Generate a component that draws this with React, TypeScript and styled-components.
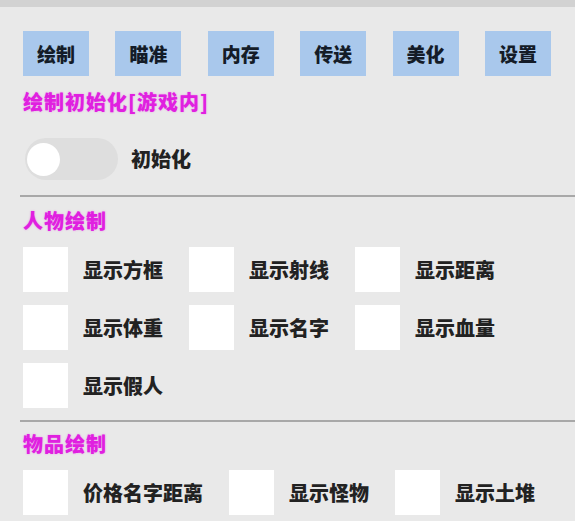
import React from "react";
import styled, { createGlobalStyle } from "styled-components";

const Global = createGlobalStyle`
  html, body {
    margin: 0;
    padding: 0;
    background: #e9e9e9;
    font-family: "Noto Sans CJK SC", "Noto Sans", sans-serif;
  }
`;

const TopBar = styled.div`
  height: 7px;
  background: #d2d2d2;
`;

const Panel = styled.div`
  padding: 24px 0 0 23px;
  display: flex;
  flex-direction: column;
`;

const Tabs = styled.div`
  display: flex;
  gap: 26.4px;
`;

const Tab = styled.button`
  width: 66px;
  height: 45px;
  border: none;
  padding: 0;
  background: #a9c8ec;
  color: #141c28;
  font-family: inherit;
  font-size: 19px;
  font-weight: 900;
  display: flex;
  align-items: center;
  justify-content: center;
`;

const SectionTitle = styled.div<{ $mt: number }>`
  margin-top: ${(p) => p.$mt}px;
  color: #e020e0;
  font-size: 20px;
  font-weight: 900;
  line-height: 24px;
  letter-spacing: 1px;
  text-shadow: 0 0 2px rgba(230, 60, 230, 0.45);
`;

const ToggleRow = styled.div`
  margin-top: 24px;
  display: flex;
  align-items: center;
  gap: 13px;
  margin-left: 2px;
`;

const Track = styled.div`
  width: 93px;
  height: 42px;
  border-radius: 21px;
  background: #dedede;
  display: flex;
  align-items: center;
  padding-left: 2px;
  box-sizing: border-box;
`;

const Knob = styled.div`
  width: 33px;
  height: 33px;
  border-radius: 50%;
  background: #ffffff;
`;

const Label = styled.span`
  color: #222222;
  font-size: 20px;
  font-weight: 900;
  line-height: 24px;
  white-space: nowrap;
`;

const Divider = styled.div<{ $mt: number }>`
  margin-top: ${(p) => p.$mt}px;
  margin-left: -3px;
  height: 2px;
  background: #a8a8a8;
`;

const Options = styled.div<{ $mt: number }>`
  margin-top: ${(p) => p.$mt}px;
  display: flex;
  flex-wrap: wrap;
  row-gap: 13px;
  column-gap: 26px;
  padding-right: 10px;
`;

const Option = styled.label`
  display: flex;
  align-items: center;
  gap: 15px;
`;

const Box = styled.div`
  width: 45px;
  height: 45px;
  background: #ffffff;
`;

const tabs = ["绘制", "瞄准", "内存", "传送", "美化", "设置"];
const people = ["显示方框", "显示射线", "显示距离", "显示体重", "显示名字", "显示血量", "显示假人"];
const items = ["价格名字距离", "显示怪物", "显示土堆"];

export default function App() {
  return (
    <>
      <Global />
      <TopBar />
      <Panel>
        <Tabs>
          {tabs.map((t) => (
            <Tab key={t}>{t}</Tab>
          ))}
        </Tabs>
        <SectionTitle $mt={14}>绘制初始化[游戏内]</SectionTitle>
        <ToggleRow>
          <Track>
            <Knob />
          </Track>
          <Label>初始化</Label>
        </ToggleRow>
        <Divider $mt={15} />
        <SectionTitle $mt={12}>人物绘制</SectionTitle>
        <Options $mt={14}>
          {people.map((p) => (
            <Option key={p}>
              <Box />
              <Label>{p}</Label>
            </Option>
          ))}
        </Options>
        <Divider $mt={12} />
        <SectionTitle $mt={10}>物品绘制</SectionTitle>
        <Options $mt={14}>
          {items.map((p) => (
            <Option key={p}>
              <Box />
              <Label>{p}</Label>
            </Option>
          ))}
        </Options>
      </Panel>
    </>
  );
}
